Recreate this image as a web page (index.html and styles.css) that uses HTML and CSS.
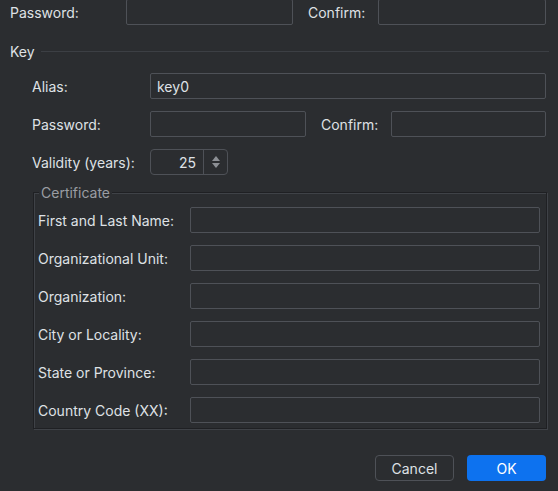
FILE: index.html
```html
<!DOCTYPE html>
<html>
<head>
<meta charset="utf-8">
<link rel="stylesheet" href="styles.css">
</head>
<body>
<div class="dialog">
  <div class="row top">
    <span class="lbl w116">Password:</span>
    <div class="field w167"></div>
    <span class="lbl confirm w70">Confirm:</span>
    <div class="field w168"></div>
  </div>

  <div class="section">
    <span class="section-title">Key</span>
    <div class="section-line"></div>
  </div>

  <div class="row indent alias">
    <span class="lbl w118">Alias:</span>
    <div class="field grow"><span class="value">key0</span></div>
  </div>

  <div class="row indent pwd">
    <span class="lbl w118">Password:</span>
    <div class="field w156"></div>
    <span class="lbl confirm w70">Confirm:</span>
    <div class="field grow"></div>
  </div>

  <div class="row indent validity">
    <span class="lbl w118">Validity (years):</span>
    <div class="spinner">
      <span class="spin-value">25</span>
      <span class="spin-arrows">
        <svg width="10" height="16" viewBox="0 0 10 16"><path d="M5 2 L9 7 L1 7 Z" fill="#8c8f94"/><path d="M1 9 L9 9 L5 14 Z" fill="#8c8f94"/></svg>
      </span>
    </div>
  </div>

  <div class="group">
    <span class="group-title">Certificate</span>
    <div class="grow-rows">
      <div class="row cert"><span class="lbl w152">First and Last Name:</span><div class="field grow"></div></div>
      <div class="row cert"><span class="lbl w152">Organizational Unit:</span><div class="field grow"></div></div>
      <div class="row cert"><span class="lbl w152">Organization:</span><div class="field grow"></div></div>
      <div class="row cert"><span class="lbl w152">City or Locality:</span><div class="field grow"></div></div>
      <div class="row cert"><span class="lbl w152">State or Province:</span><div class="field grow"></div></div>
      <div class="row cert"><span class="lbl w152">Country Code (XX):</span><div class="field grow"></div></div>
    </div>
  </div>

  <div class="buttons">
    <div class="btn cancel">Cancel</div>
    <div class="btn ok">OK</div>
  </div>
</div>
</body>
</html>
```
FILE: styles.css
```css
html, body {
  margin: 0;
  padding: 0;
  background: #2b2d30;
}
body {
  width: 558px;
  height: 491px;
  overflow: hidden;
  font-family: Inter, "Noto Sans", sans-serif;
  font-size: 14px;
  color: #dfe1e5;
}
.dialog {
  display: flex;
  flex-direction: column;
  padding-right: 12px;
}
.row {
  display: flex;
  align-items: center;
  height: 26px;
}
.top {
  padding-left: 10px;
  margin-top: -1px;
}
.indent {
  padding-left: 32px;
}
.lbl {
  flex: none;
  white-space: nowrap;
}
.w116 { width: 116px; }
.w118 { width: 118px; }
.w152 { width: 152px; }
.w70 { width: 70px; }
.confirm { margin-left: 15px; }
.field {
  box-sizing: border-box;
  height: 26px;
  border: 1px solid #4e5157;
  border-radius: 2px;
  display: flex;
  align-items: center;
  padding-left: 6px;
}
.w167 { width: 167px; flex: none; }
.w168 { width: 168px; flex: none; }
.w156 { width: 156px; flex: none; }
.grow { flex: 1; }
.section {
  display: flex;
  align-items: center;
  height: 24px;
  margin-top: 14px;
  padding-left: 10px;
  margin-right: -3px;
}
.section-title {
  margin-right: 6px;
}
.section-line {
  flex: 1;
  height: 1px;
  background: #3c3f44;
}
.alias { margin-top: 10px; }
.pwd { margin-top: 12px; }
.validity { margin-top: 12px; }
.spinner {
  box-sizing: border-box;
  width: 78px;
  height: 26px;
  border: 1px solid #4e5157;
  border-radius: 4px;
  display: flex;
  align-items: stretch;
}
.spin-value {
  width: 53px;
  display: flex;
  align-items: center;
  justify-content: flex-end;
  padding-right: 7px;
  box-sizing: border-box;
  border-right: 1px solid #4e5157;
}
.spin-arrows {
  flex: 1;
  display: flex;
  align-items: center;
  justify-content: center;
}
.spin-arrows svg { display: block; }
.group {
  position: relative;
  margin-top: 17px;
  margin-left: 33px;
  margin-right: -1px;
  height: 237px;
  border: 1px solid #1f2023;
  box-shadow: 1px 1px 0 #3f4247, inset 1px 1px 0 #3f4247;
  box-sizing: border-box;
}
.group-title {
  position: absolute;
  top: -8px;
  left: 5px;
  padding: 0 2px;
  background: #2b2d30;
  color: #9a9da3;
  line-height: 16px;
}
.grow-rows {
  display: flex;
  flex-direction: column;
  gap: 12px;
  padding: 14px 6px 0 4px;
}
.buttons {
  display: flex;
  justify-content: flex-end;
  gap: 13px;
  margin-top: 26px;
}
.btn {
  box-sizing: border-box;
  width: 79px;
  height: 26px;
  border-radius: 4px;
  display: flex;
  align-items: center;
  justify-content: center;
}
.cancel {
  border: 1px solid #4e5157;
}
.ok {
  background: #0d72ef;
  color: #ffffff;
}
```
